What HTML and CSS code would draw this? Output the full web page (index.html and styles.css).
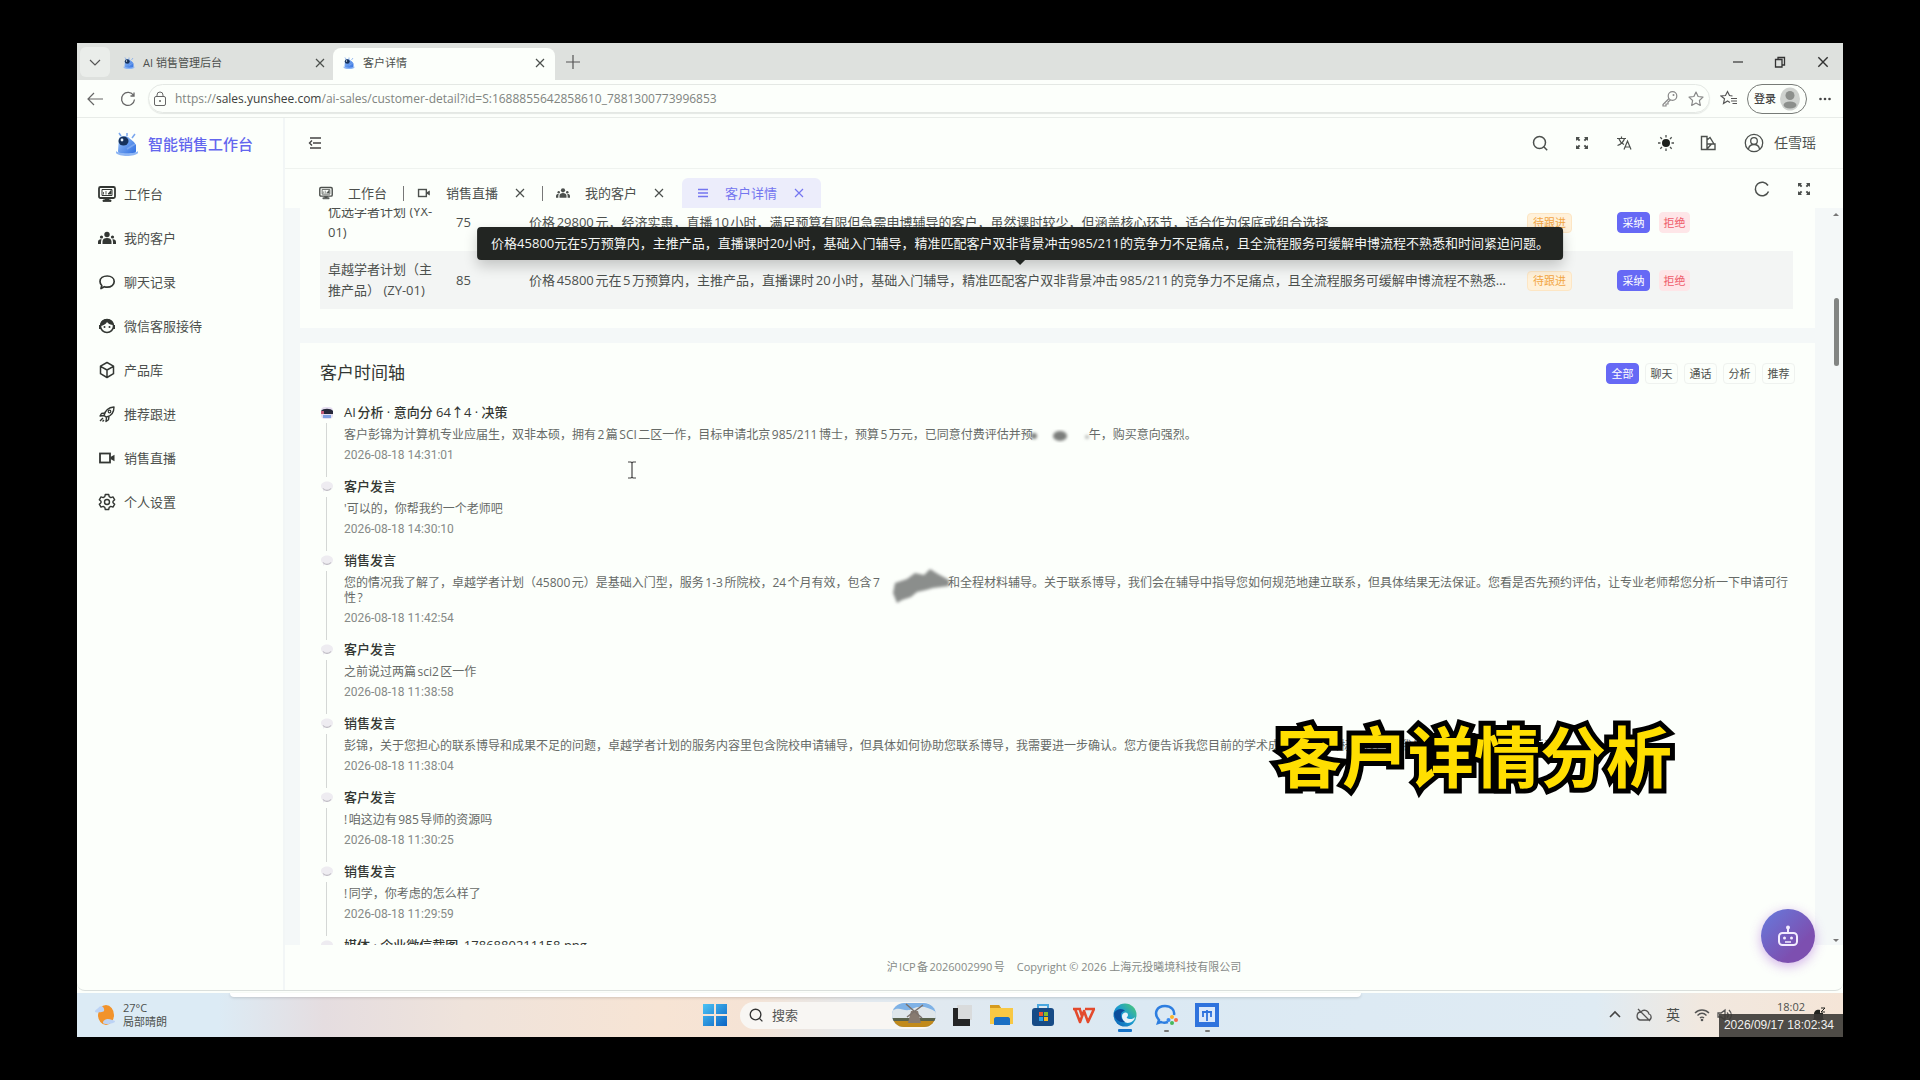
FILE: index.html
```html
<!DOCTYPE html>
<html lang="zh-CN">
<head>
<meta charset="utf-8">
<title>客户详情</title>
<link rel="stylesheet" href="styles.css">
</head>
<body>
<svg class="defs" aria-hidden="true">
  <defs>
    <linearGradient id="gBlue" x1="0" y1="0" x2="1" y2="1"><stop offset="0" stop-color="#4cc3f5"/><stop offset="1" stop-color="#0a63c4"/></linearGradient>
    <linearGradient id="gBot" x1="0" y1="0" x2="1" y2="1"><stop offset="0" stop-color="#9cc4f8"/><stop offset="1" stop-color="#2a6be0"/></linearGradient>
    <linearGradient id="gEdge" x1="0" y1="1" x2="1" y2="0"><stop offset="0" stop-color="#0b5cb5"/><stop offset=".5" stop-color="#1c9bd0"/><stop offset="1" stop-color="#52cf6b"/></linearGradient>
    <filter id="soft" x="-20%" y="-20%" width="140%" height="140%"><feGaussianBlur stdDeviation="1.4"/></filter>
  </defs>
  <symbol id="i-monitor" viewBox="0 0 18 18"><rect x="1" y="2" width="16" height="11" rx="1.500" fill="none" stroke="currentColor" stroke-width="1.800"/><path d="M4 4.500h10v6H4z" fill="none" stroke="currentColor" stroke-width="1"/><path d="M5.500 9.500V7M8 9.500V6M10 9l3-3.500V9zM7 13.500h4V15h2v1.500H5V15h2z" fill="currentColor" stroke="currentColor" stroke-width=".8"/></symbol>
  <symbol id="i-people" viewBox="0 0 18 18"><g fill="currentColor"><circle cx="9" cy="5.500" r="2.700"/><circle cx="3.500" cy="8" r="1.600"/><circle cx="14.500" cy="8" r="1.600"/><path d="M4.500 15v-2.500C4.500 10 6.500 9 9 9s4.500 1 4.500 3.500V15zM0 15v-2c0-2 1.500-2.800 3.600-2.600C3 11.500 3 13 3 15zM18 15v-2c0-2-1.500-2.800-3.600-2.600C15 11.500 15 13 15 15z"/></g></symbol>
  <symbol id="i-chat" viewBox="0 0 18 18"><path d="M3 15.500l.8-3C2.500 11.300 2 10 2 8.500 2 5.200 5.200 3 9.200 3s7 2.300 7 5.500-3 5.700-7 5.700c-1 0-2-.2-2.900-.5z" fill="none" stroke="currentColor" stroke-width="1.700" stroke-linejoin="round"/></symbol>
  <symbol id="i-service" viewBox="0 0 18 18"><circle cx="9" cy="9" r="6.500" fill="none" stroke="currentColor" stroke-width="1.500"/><path d="M2.500 9C2 4 5.500 2 9 2s6.500 2.500 6.500 6c-3 0-5-1-6.500-3-1 2-3.500 3.500-6.500 4z" fill="currentColor"/><circle cx="6.500" cy="10" r="1" fill="currentColor"/><circle cx="11.500" cy="10" r="1" fill="currentColor"/><path d="M1 8h2v4H1zM15 8h2v4h-2z" fill="currentColor"/></symbol>
  <symbol id="i-box" viewBox="0 0 18 18"><path d="M9 1.500l6.500 3.600v7.600L9 16.500l-6.500-3.800V5.100zM2.500 5.300L9 9l6.500-3.700M9 9v7.500" fill="none" stroke="currentColor" stroke-width="1.500" stroke-linejoin="round"/></symbol>
  <symbol id="i-rocket" viewBox="0 0 18 18"><path d="M6 10.500C7 6 10 2.500 16 2c0 5.500-3 9-7.500 10zM6.800 8L3.500 8.500 2 11l4-.5 2.500 2L8 16.500l2.500-1.800.5-3.300M2 16l3-3M4.500 16.500L6 15" fill="none" stroke="currentColor" stroke-width="1.400" stroke-linejoin="round"/><circle cx="11.500" cy="6.500" r="1.300" fill="none" stroke="currentColor" stroke-width="1.200"/></symbol>
  <symbol id="i-video" viewBox="0 0 18 18"><rect x="2" y="4.500" width="10" height="9" fill="none" stroke="currentColor" stroke-width="1.800"/><path d="M12.500 8l4-2.300v6.600l-4-2.300z" fill="currentColor"/></symbol>
  <symbol id="i-gear" viewBox="0 0 18 18"><path d="M7.300 1.500h3.400l.5 2.200 1.600.9 2.200-.7 1.700 2.900-1.700 1.500v1.400l1.700 1.500-1.700 2.900-2.200-.7-1.600.9-.5 2.200H7.300l-.5-2.200-1.600-.9-2.200.7-1.700-2.900L3 9.700V8.300L1.300 6.800 3 3.900l2.200.7 1.600-.9z" fill="none" stroke="currentColor" stroke-width="1.400" stroke-linejoin="round"/><circle cx="9" cy="9" r="2.500" fill="none" stroke="currentColor" stroke-width="1.400"/></symbol>
  <symbol id="i-close" viewBox="0 0 12 12"><path d="M2 2l8 8M10 2l-8 8" stroke="currentColor" stroke-width="1.200"/></symbol>
  <symbol id="i-expand" viewBox="0 0 18 18"><path d="M3 3h4L5.800 4.200 7.300 6 6 7.300 4.200 5.800 3 7zM15 3h-4l1.200 1.200L10.700 6 12 7.300l1.800-1.500L15 7zM3 15h4l-1.200-1.200L7.300 12 6 10.700l-1.800 1.500L3 11zM15 15h-4l1.200-1.200-1.500-1.800 1.300-1.300 1.800 1.500L15 11z" fill="currentColor"/></symbol>
  <symbol id="i-search" viewBox="0 0 18 18"><circle cx="8.500" cy="8.500" r="6" fill="none" stroke="currentColor" stroke-width="1.500"/><path d="M12.800 12.800l3.400 3.400" stroke="currentColor" stroke-width="1.500"/></symbol>
  <symbol id="i-reload" viewBox="0 0 18 18"><path d="M14.600 5.500A6.500 6.500 0 1 0 15.500 9.500M15 2.500v3.500h-3.500" fill="none" stroke="currentColor" stroke-width="1.300"/></symbol>
  <symbol id="i-star" viewBox="0 0 18 18"><path d="M9 2l2.100 4.500 4.900.6-3.600 3.400.9 4.900L9 13l-4.300 2.400.9-4.900L2 7.100l4.900-.6z" fill="none" stroke="currentColor" stroke-width="1.200" stroke-linejoin="round"/></symbol>
  <symbol id="i-bot" viewBox="0 0 24 24"><path d="M4 6c2-2 6-3 9-1 3 3 6 4 8 8v6c0 3-4 4-9 4s-9-1-9-4z" fill="url(#gBot)"/><path d="M1 19c2 3 20 3 22 0v2c-3 4-19 4-22 0z" fill="#8eb6f4"/><ellipse cx="8.500" cy="9" rx="5" ry="4.500" fill="#16325c"/><circle cx="7" cy="8" r="1.400" fill="#eaf4ff"/><path d="M6 4l-2-3M12 4V1M17 6l3-4M12 17l8-5" stroke="#79a6ee" stroke-width="1.500"/></symbol>
  <symbol id="i-bubble" viewBox="0 0 14 14"><path d="M1 6c0-3 3-4.500 6-4.500S13 3 13 6s-3 5-6 5c-1 0-2 0-2.500-.4L3 12V9.500C1.800 8.700 1 7.500 1 6z" fill="#eeecf1"/><path d="M3 8.500c2 2.500 6 2.500 8 0" fill="none" stroke="#bdbbc2" stroke-width="1.200"/></symbol>
</svg>

<div class="screen">
  <header class="tabbar">
    <button class="tab-menu" aria-label="标签页菜单"><svg width="14" height="14" viewBox="0 0 14 14"><path d="M2 5l5 5 5-5" fill="none" stroke="#555" stroke-width="1.200"/></svg></button>
    <div class="btab"><svg width="12" height="12"><use href="#i-bot"/></svg><span>AI 销售管理后台</span><button aria-label="关闭"><svg width="12" height="12"><use href="#i-close"/></svg></button></div>
    <div class="btab active"><svg width="12" height="12"><use href="#i-bot"/></svg><span>客户详情</span><button aria-label="关闭"><svg width="12" height="12"><use href="#i-close"/></svg></button></div>
    <button class="new-tab" aria-label="新建标签页"><svg width="14" height="14" viewBox="0 0 14 14"><path d="M7 0v14M0 7h14" stroke="#555" stroke-width="1.200"/></svg></button>
    <div class="win-ctl">
      <button aria-label="最小化"><svg width="12" height="12" viewBox="0 0 12 12"><path d="M1 6h10" stroke="#333" stroke-width="1.200"/></svg></button>
      <button aria-label="还原"><svg width="12" height="12" viewBox="0 0 12 12"><path d="M1.500 3.500h6.500V11H1.500zM4 3.500V1.500h6.500V9H8" fill="none" stroke="#333" stroke-width="1.300"/></svg></button>
      <button aria-label="关闭窗口"><svg width="14" height="14"><use href="#i-close"/></svg></button>
    </div>
  </header>

  <div class="toolbar">
    <button aria-label="后退"><svg width="18" height="16" viewBox="0 0 18 16"><path d="M17 8H2M8 2L2 8l6 6" fill="none" stroke="#666" stroke-width="1.200"/></svg></button>
    <button aria-label="刷新"><svg width="18" height="18"><use href="#i-reload"/></svg></button>
    <div class="url">
      <svg width="14" height="16" viewBox="0 0 14 16"><rect x="1.500" y="5.500" width="11" height="9" rx="1.500" fill="none" stroke="#666"/><path d="M4 5.500V4a3 3 0 0 1 6 0v1.500" fill="none" stroke="#666"/><circle cx="7" cy="10" r="1" fill="#666"/></svg>
      <span class="address">https://<b>sales.yunshee.com</b>/ai-sales/customer-detail?id=S:1688855642858610_7881300773996853</span>
      <svg width="18" height="18" viewBox="0 0 18 18"><circle cx="11.500" cy="6" r="4.300" fill="none" stroke="#888" stroke-width="1.200"/><circle cx="12.500" cy="5" r="1" fill="#888"/><path d="M8 8.500l-6 6V16h3v-2h2v-2l2.500-2" fill="none" stroke="#888" stroke-width="1.200"/></svg>
      <svg width="18" height="18" color="#888"><use href="#i-star"/></svg>
    </div>
    <svg width="18" height="18" viewBox="0 0 18 18"><path d="M10 12.500L7.500 11l-4 2.500 1-4.700L1 6l4.500-.5L7.500 1.500l2 4 3 .5M11 8.500h6M11 11h6M12.500 13.500H17" fill="none" stroke="#555" stroke-width="1.200"/></svg>
    <button class="login">登录<svg width="20" height="24" viewBox="0 0 20 24"><ellipse cx="10" cy="12" rx="10" ry="11.500" fill="#cfd2cf"/><circle cx="10" cy="8.500" r="4.500" fill="#8c8f8c"/><ellipse cx="10" cy="18" rx="6.500" ry="3.500" fill="#8c8f8c"/></svg></button>
    <button aria-label="更多"><svg width="14" height="6" viewBox="0 0 14 6"><g fill="#444"><circle cx="2.500" cy="3" r="1.300"/><circle cx="7" cy="3" r="1.300"/><circle cx="11.500" cy="3" r="1.300"/></g></svg></button>
  </div>

  <div class="app">
    <aside class="side">
      <div class="brand"><svg width="24" height="24"><use href="#i-bot"/></svg>智能销售工作台</div>
      <nav>
        <a href="#"><svg><use href="#i-monitor"/></svg>工作台</a>
        <a href="#"><svg><use href="#i-people"/></svg>我的客户</a>
        <a href="#"><svg><use href="#i-chat"/></svg>聊天记录</a>
        <a href="#"><svg><use href="#i-service"/></svg>微信客服接待</a>
        <a href="#"><svg><use href="#i-box"/></svg>产品库</a>
        <a href="#"><svg><use href="#i-rocket"/></svg>推荐跟进</a>
        <a href="#"><svg><use href="#i-video"/></svg>销售直播</a>
        <a href="#"><svg><use href="#i-gear"/></svg>个人设置</a>
      </nav>
    </aside>

    <div class="main">
      <div class="head">
        <button aria-label="折叠菜单"><svg width="14" height="14" viewBox="0 0 14 14"><path d="M2 2h11M5 7h8M2 12h11M4 4.500L1.500 7 4 9.500" fill="none" stroke="#444" stroke-width="1.400"/></svg></button>
        <div class="tools">
          <button aria-label="搜索"><svg><use href="#i-search"/></svg></button>
          <button aria-label="全屏"><svg><use href="#i-expand"/></svg></button>
          <button aria-label="语言"><svg viewBox="0 0 18 18"><path d="M2 4.500h9M6.500 2.500v2M9.500 4.500C8.500 8 5.500 10.500 2.500 11.500M4 5c.8 2.500 3 4.500 5 5.500M9 15.500L12.500 7l3.500 8.500M10 13h5" fill="none" stroke="currentColor" stroke-width="1.200"/></svg></button>
          <button aria-label="主题"><svg viewBox="0 0 18 18"><circle cx="9" cy="9" r="4" fill="#1d211d"/><path d="M9 1v2.500M9 14.500V17M1 9h2.500M14.500 9H17M3.300 3.300L5 5M13 13l1.700 1.700M3.300 14.700L5 13M13 5l1.700-1.700" stroke="currentColor" stroke-width="1.300"/></svg></button>
          <button aria-label="布局"><svg viewBox="0 0 18 18"><path d="M2.500 2.500h5.500v13H2.500zM8 6l3-2.500 4 6.500H8M8 15.500h8V10h-3.500L8 15" fill="none" stroke="currentColor" stroke-width="1.400"/></svg></button>
        </div>
        <button class="user"><svg width="20" height="20" viewBox="0 0 20 20"><circle cx="10" cy="10" r="8.700" fill="none" stroke="currentColor" stroke-width="1.300"/><circle cx="10" cy="8" r="3.300" fill="none" stroke="currentColor" stroke-width="1.300"/><path d="M4.500 16c.5-3 2.500-4.500 5.500-4.500s5 1.500 5.500 4.500" fill="none" stroke="currentColor" stroke-width="1.300"/></svg>任雪瑶</button>
      </div>

      <div class="tabs">
        <a class="ptab" href="#"><svg><use href="#i-monitor"/></svg>工作台</a>
        <a class="ptab" href="#"><svg><use href="#i-video"/></svg>销售直播<svg class="x"><use href="#i-close"/></svg></a>
        <a class="ptab" href="#"><svg><use href="#i-people"/></svg>我的客户<svg class="x"><use href="#i-close"/></svg></a>
        <a class="ptab current" href="#"><svg viewBox="0 0 14 14"><path d="M2 3.500h10M2 7h10M2 10.500h10" stroke="currentColor" stroke-width="1.400"/></svg>客户详情<svg class="x"><use href="#i-close"/></svg></a>
        <div class="tabtools">
          <button aria-label="刷新页面"><svg viewBox="0 0 18 18"><path d="M15 5.500a6.800 6.800 0 1 0 .5 6" fill="none" stroke="currentColor" stroke-width="1.500"/></svg></button>
          <button aria-label="最大化"><svg><use href="#i-expand"/></svg></button>
        </div>
      </div>

      <div class="view">
        <section class="card recs">
          <table>
            <colgroup><col class="c-name"><col class="c-score"><col><col class="c-state"><col class="c-act"></colgroup>
            <tr>
              <td>优选学者计划 (YX-01)</td><td>75</td>
              <td><div class="clip">价格29800元，经济实惠，直播10小时，满足预算有限但急需申博辅导的客户，虽然课时较少，但涵盖核心环节，适合作为保底或组合选择</div></td>
              <td><span class="tag">待跟进</span></td>
              <td><button class="btn primary">采纳</button><button class="btn danger">拒绝</button></td>
            </tr>
            <tr class="hover">
              <td>卓越学者计划（主推产品） (ZY-01)</td><td>85</td>
              <td class="tipcell"><div class="clip">价格45800元在5万预算内，主推产品，直播课时20小时，基础入门辅导，精准匹配客户双非背景冲击985/211的竞争力不足痛点，且全流程服务可缓解申博流程不熟悉和时间紧迫问题。</div>
                <div class="tip" role="tooltip">价格45800元在5万预算内，主推产品，直播课时20小时，基础入门辅导，精准匹配客户双非背景冲击985/211的竞争力不足痛点，且全流程服务可缓解申博流程不熟悉和时间紧迫问题。</div></td>
              <td><span class="tag">待跟进</span></td>
              <td><button class="btn primary">采纳</button><button class="btn danger">拒绝</button></td>
            </tr>
          </table>
        </section>

        <section class="card">
          <div class="card-head">
            <h2>客户时间轴</h2>
            <div class="filters"><button class="btn primary">全部</button><button class="btn">聊天</button><button class="btn">通话</button><button class="btn">分析</button><button class="btn">推荐</button></div>
          </div>
          <ol class="line">
            <li><svg viewBox="0 0 14 14"><rect x="1" y="1" width="12" height="12" rx="4" fill="#e6dff0"/><path d="M1 5c2-3 10-3 12 0v3H1z" fill="#26283a"/><path d="M1 5h3v3H1z" fill="#c05a78"/><path d="M3 9h8v3H3z" fill="#7e9fe0"/></svg>
              <div><h3>AI分析 · 意向分 64↑4 · 决策</h3><p>客户彭锦为计算机专业应届生，双非本硕，拥有2篇SCI二区一作，目标申请北京985/211博士，预算5万元，已同意付费评估并预<svg class="smudge sm" viewBox="0 0 56 14"><g filter="url(#soft)" fill="#7b7e7b"><circle cx="1" cy="7" r="3"/><ellipse cx="27" cy="7" rx="7" ry="5"/><circle cx="54" cy="8" r="2" fill="#b5b8b5"/></g></svg>午，购买意向强烈。</p><time>2026-08-18 14:31:01</time></div></li>
            <li><svg><use href="#i-bubble"/></svg><div><h3>客户发言</h3><p>'可以的，你帮我约一个老师吧</p><time>2026-08-18 14:30:10</time></div></li>
            <li><svg><use href="#i-bubble"/></svg><div><h3>销售发言</h3><p>您的情况我了解了，卓越学者计划（45800元）是基础入门型，服务1-3所院校，24个月有效，包含7<svg class="smudge lg" viewBox="0 0 68 36"><path d="M15 17l12-4 8-6 9 2 6-6 8 5 11 6v6l-16 2-7 2-9 2-6 5-9 3-5 3-4-10z" fill="#8b8e8c" filter="url(#soft)"/></svg>和全程材料辅导。关于联系博导，我们会在辅导中指导您如何规范地建立联系，但具体结果无法保证。您看是否先预约评估，让专业老师帮您分析一下申请可行性?</p><time>2026-08-18 11:42:54</time></div></li>
            <li><svg><use href="#i-bubble"/></svg><div><h3>客户发言</h3><p>之前说过两篇sci2区一作</p><time>2026-08-18 11:38:58</time></div></li>
            <li><svg><use href="#i-bubble"/></svg><div><h3>销售发言</h3><p>彭锦，关于您担心的联系博导和成果不足的问题，卓越学者计划的服务内容里包含院校申请辅导，但具体如何协助您联系博导，我需要进一步确认。您方便告诉我您目前的学术成果和北京目标院校吗？我先为您做一个初步的分析评估。</p><time>2026-08-18 11:38:04</time></div></li>
            <li><svg><use href="#i-bubble"/></svg><div><h3>客户发言</h3><p>!咱这边有985导师的资源吗</p><time>2026-08-18 11:30:25</time></div></li>
            <li><svg><use href="#i-bubble"/></svg><div><h3>销售发言</h3><p>!同学，你考虑的怎么样了</p><time>2026-08-18 11:29:59</time></div></li>
            <li><svg><use href="#i-bubble"/></svg><div><h3>媒体 · 企业微信截图_1786880211158.png</h3></div></li>
          </ol>
        </section>
        <div class="scroll"><i class="up"></i><i class="thumb"></i><i class="down"></i></div>
      </div>
      <footer><span>沪ICP备2026002990号</span><span>Copyright © 2026 上海元投曦境科技有限公司</span></footer>
      <button class="assistant" aria-label="智能助手"><svg width="22" height="22" viewBox="0 0 22 22"><rect x="2" y="8" width="18" height="12" rx="3.500" fill="none" stroke="#f3ecff" stroke-width="2"/><path d="M11 8V3" stroke="#f3ecff" stroke-width="2"/><circle cx="11" cy="2.500" r="2" fill="#f3ecff"/><circle cx="7.500" cy="13" r="1.500" fill="#f3ecff"/><circle cx="14.500" cy="13" r="1.500" fill="#f3ecff"/><path d="M8 17h6" stroke="#f3ecff" stroke-width="1.500"/></svg></button>
    </div>
  </div>

  <div class="taskbar">
    <div class="weather"><svg width="22" height="24" viewBox="0 0 22 24"><ellipse cx="12" cy="12" rx="8" ry="10" fill="#f2932b"/><path d="M1 9c0-3 3-3 4-5 3-2 6 1 5 4 0 1-8 2-9 1zM9 20c0-3 3-4 5-4 3 0 4 1 7 2 1 3-11 4-12 2z" fill="#bcd3f5"/></svg><div><span>27°C</span><span>局部晴朗</span></div></div>
    <div class="dock">
      <svg width="24" height="24" viewBox="0 0 24 24"><path d="M0 1h11v10H0zM13 1h11v10H13zM0 13h11v10H0zM13 13h11v10H13z" fill="url(#gBlue)"/></svg>
      <label class="search"><svg width="16" height="16"><use href="#i-search"/></svg><input type="text" placeholder="搜索" aria-label="搜索"><svg width="44" height="24" viewBox="0 0 44 24"><clipPath id="pic"><rect width="44" height="24" rx="12"/></clipPath><g clip-path="url(#pic)"><path d="M0 0h44v24H0z" fill="#7fb2e6"/><path d="M0 8c8-6 12 2 20-2s16-2 24 3v6H0z" fill="#dfe6ea"/><path d="M0 18h44v6H0z" fill="#c18a1c"/><path d="M0 15h44v3H0z" fill="#59614a"/><path d="M19 8l7 0 3 12H16z" fill="#877a70"/><path d="M14 1l16 14M31 2L15 14" stroke="#7b726c" stroke-width="1.500"/></g></svg></label>
      <svg width="24" height="24" viewBox="0 0 24 24"><path d="M8 2h15v15H8z" fill="#d9dbdc"/><path d="M4 5h5v11h12v7H4z" fill="#242526"/></svg>
      <svg width="24" height="24" viewBox="0 0 24 24"><path d="M0 2h9l2 3h12v16H0z" fill="#f8c844"/><path d="M0 2h9l2 3H0z" fill="#d69b1e"/><path d="M4 22v-6c0-1 1-2 2-2h12c1 0 2 1 2 2v6z" fill="#1a6fc4"/></svg>
      <svg width="24" height="24" viewBox="0 0 24 24"><path d="M7 6V2h10v4" fill="none" stroke="#4aa7e0" stroke-width="2"/><rect x="1" y="5" width="22" height="18" rx="3" fill="#174b86"/><path d="M8 9h4v4H8z" fill="#f0562e"/><path d="M13 9h4v4h-4z" fill="#86bd2c"/><path d="M8 14h4v4H8z" fill="#2ea3e6"/><path d="M13 14h4v4h-4z" fill="#f8b91c"/></svg>
      <svg width="24" height="24" viewBox="0 0 24 24"><path d="M1 6h8M13 6h10M3 6l5 13 4-11 4 11 6-13M8 7l2 6" fill="none" stroke="#e34a2d" stroke-width="2.600" stroke-linejoin="round"/></svg>
      <span class="running on"><svg width="24" height="24" viewBox="0 0 24 24"><circle cx="12" cy="12" r="11.500" fill="url(#gEdge)"/><path d="M9 13c0-4 6-5 6-1 0 2-2 2-1 3 2 2 7 1 8-1-1 7-13 9-13-1z" fill="#e8f3fa"/><path d="M1 10c3-5 9-5 11-2-5 0-6 7 0 11-7 1-11-4-11-9z" fill="#0c4d9c"/></svg></span>
      <span class="running"><svg width="24" height="24" viewBox="0 0 24 24"><path d="M14 19c-3 1-5 1-7 0l-3 1 1-3C-1 10 3 3 11 3c6 0 10 4 9 9" fill="none" stroke="#2d7ee0" stroke-width="2.500"/><circle cx="18" cy="14" r="2" fill="#f9b42a"/><circle cx="22" cy="17" r="2" fill="#fb6a4a"/><circle cx="18" cy="20" r="2" fill="#46b85c"/><circle cx="14.500" cy="17" r="2" fill="#3b8bf0"/></svg></span>
      <span class="running"><svg width="24" height="24" viewBox="0 0 24 24"><path d="M0 0h24v24H0z" fill="#2f73dd"/><path d="M4 4h16v15H4z" fill="#dbe9fb"/><path d="M12 7v11M7 9h10M8 9v5M16 9v5" fill="none" stroke="#2f73dd" stroke-width="1.800"/></svg></span>
    </div>
    <div class="tray">
      <svg width="14" height="14" viewBox="0 0 14 14"><path d="M2 9l5-5 5 5" fill="none" stroke="#444" stroke-width="1.600"/></svg>
      <svg width="16" height="16" viewBox="0 0 16 16"><path d="M4 13h8c4 0 4-5 1-6-1-4-6-5-8-2-5 0-5 7-1 8zM2 2l12 12" fill="none" stroke="#555" stroke-width="1.300"/></svg>
      <span>英</span>
      <svg width="16" height="16" viewBox="0 0 16 16"><path d="M1 6c4-4 10-4 14 0M3.500 8.500c3-3 6-3 9 0M6 11c1-1 3-1 4 0" fill="none" stroke="#555" stroke-width="1.400"/><circle cx="8" cy="13" r="1.300" fill="#555"/></svg>
      <svg class="volume" width="16" height="16" viewBox="0 0 16 16"><path d="M1 6h3l4-3v10l-4-3H1zM10 5.500c1.500 1.500 1.500 3.500 0 5M12 3c3 3 3 7 0 10" fill="none" stroke="#555" stroke-width="1.300"/></svg>
      <time>18:02</time>
      <svg width="14" height="16" viewBox="0 0 14 16"><path d="M2 11V7c0-4 4-5 6-4v3h3v5l1 2H1z" fill="#22231f"/><path d="M9 1h4L9 5h4" fill="none" stroke="#22231f"/></svg>
    </div>
  </div>

  <div class="stamp">2026/09/17 18:02:34</div>
  <div class="caption">客户详情分析</div>
  <svg class="ibeam" viewBox="0 0 10 18"><path d="M1 1h3l1 1 1-1h3M5 2v14M1 17h3l1-1 1 1h3" fill="none" stroke="#444" stroke-width="1.200"/></svg>
</div>
</body>
</html>
```
FILE: styles.css
```css
* { box-sizing: border-box; }
html, body { margin: 0; height: 100%; }
body {
  background: #000;
  padding: 43px 77px;
  font: 13px/20px "Open Sans", "Noto Sans CJK SC", sans-serif;
  color: #4c504d;
  text-autospace: normal;
}
button { border: 0; padding: 0; margin: 0; background: none; font: inherit; color: inherit; display: inline-flex; align-items: center; justify-content: center; }
a { color: inherit; text-decoration: none; }
h2, h3, p, ol { margin: 0; padding: 0; font-weight: 400; }
svg { display: block; flex: none; }
.defs { position: absolute; width: 0; height: 0; }

.screen { position: relative; height: 100%; display: flex; flex-direction: column; background: #fcfffb; overflow: hidden; }

/* browser chrome */
.tabbar { display: flex; align-items: flex-end; height: 37px; flex: none; background: #dee1de; font-size: 11px; padding-left: 3px; }
.tab-menu { width: 30px; height: 30px; margin: 0 3px 3px 0; border-radius: 6px; background: #eaedea; }
.btab { width: 222px; height: 32px; display: flex; align-items: center; gap: 8px; padding: 0 9px 3px 10px; border-radius: 8px 8px 0 0; }
.btab:not(.active) { margin-right: -2px; }
.btab.active { background: #fcfffb; }
.btab span { flex: 1; }
.new-tab { width: 36px; height: 36px; padding-bottom: 1px; }
.win-ctl { display: flex; gap: 30px; align-self: center; margin-left: auto; padding-right: 13px; color: #333; }
.toolbar { display: flex; align-items: center; height: 38px; flex: none; gap: 15px; padding: 0 11px 0 9px; border-bottom: 1px solid #e8ece8; color: #666; }
.url { flex: 1; display: flex; align-items: center; gap: 8px; height: 29px; border: 1px solid #e4e8e4; border-radius: 15px; padding: 0 4px; margin: 0 -5px 0 -4px; box-shadow: 0 1px 1px #e4e8e4; }
.address { flex: 1; font-size: 12px; color: #808480; }
.address b { font-weight: 400; color: #3c403c; }
.login { width: 60px; height: 30px; gap: 4px; border: 1px solid #777b77; border-radius: 15px; font-size: 11px; font-weight: 500; margin: 0 -4px 0 -6px; color: #444; }

/* application */
.app { flex: 1; min-height: 0; display: flex; border-bottom: 1px solid #dadfdc; border-radius: 0 0 8px 8px; }
.side { width: 208px; flex: none; border-right: 2px solid #f2f6f6; }
.brand { display: flex; align-items: center; gap: 9px; height: 52px; padding-left: 38px; font-size: 15px; font-weight: 500; color: #6366ee; }
.side a { display: flex; align-items: center; gap: 8px; height: 44px; padding-left: 21px; }
.side nav { padding-top: 2px; }
.side svg { color: #333733; }
.side a svg { width: 18px; height: 18px; }
.main { position: relative; flex: 1; min-width: 0; display: flex; flex-direction: column; }
.head { display: flex; align-items: center; height: 51px; flex: none; padding: 0 27px 0 23px; border-bottom: 1px solid #eff3ef; }
.tools { display: flex; gap: 24px; margin-left: auto; }
.tools svg, .tabtools svg { width: 18px; height: 18px; }
.user { gap: 10px; margin-left: 27px; font-size: 14px; }
.tabs { display: flex; align-items: flex-end; height: 39px; flex: none; padding: 0 30px 0 22px; }
.ptab { display: flex; align-items: center; height: 30px; gap: 15px; padding: 0 2px 0 12px; }
.ptab svg { width: 14px; height: 14px; }
.ptab .x { width: 12px; height: 12px; margin-left: 1px; }
.ptab + .ptab:not(.current)::before { content: ""; width: 1px; height: 15px; background: #777; margin: 0 -2px 0 2px; }
.ptab.current { background: #ecedfb; color: #7476f0; padding: 0 16px 0 14px; margin-left: 15px; border-radius: 6px 6px 0 0; }
.tabtools { display: flex; gap: 24px; margin-left: auto; align-self: center; }

.view { position: relative; flex: 1; min-height: 0; overflow: hidden; background: #f4f8f8; padding: 0 28px 0 15px; }
.card { background: #fcfffb; padding: 0 22px 0 20px; margin-bottom: 15px; }
.recs { margin-top: -15px; padding-bottom: 19px; }
table { width: 100%; table-layout: fixed; border-collapse: collapse; line-height: 21px; }
td { height: 58px; padding: 0 8px; }
.c-name { width: 128px; } .c-score { width: 73px; } .c-state { width: 90px; } .c-act { width: 184px; }
.hover td { background: #f3f5f4; }
.clip { overflow: hidden; white-space: nowrap; text-overflow: ellipsis; }
.tipcell { position: relative; }
.tip { position: absolute; bottom: 49px; left: 50%; transform: translateX(-50%); padding: 6px 14px; white-space: nowrap; text-autospace: no-autospace; color: #f4f6f4; background: #222522; border-radius: 4px; box-shadow: 0 6px 14px rgba(0,0,0,.2); z-index: 2; }
.tip::after { content: ""; position: absolute; top: 100%; left: 50%; margin-left: -5px; border: 5px solid transparent; border-top-color: #222522; }
.tag { display: inline-block; padding: 0 5px; font-size: 11px; line-height: 18px; border: 1px solid #fde6c4; border-radius: 4px; background: #fff1da; color: #f2a644; }
.btn { height: 21px; width: 33px; font-size: 11px; line-height: 19px; border: 1px solid #eff2ef; border-radius: 4px; }
.btn.primary { background: #6669f5; border-color: #6669f5; color: #fff; }
.btn.danger { background: #fee6e8; border-color: #fee6e8; color: #ef5b6b; width: 31px; margin-left: 9px; }
.card-head { display: flex; align-items: center; justify-content: space-between; height: 60px; margin-right: -2px; }
h2 { font-size: 17px; line-height: 24px; color: #333733; }
.filters { display: flex; gap: 6px; }
.line { list-style: none; }
.line li { position: relative; display: flex; gap: 10px; padding-bottom: 14px; }
.line li > svg { width: 14px; height: 14px; margin-top: 3px; }
.line li::after { content: ""; position: absolute; left: 6px; top: 20px; bottom: 0; width: 1px; background: #d4d7d5; }
h3 { font-size: 13px; line-height: 18px; font-weight: 500; color: #333733; }
.line p { font-size: 12px; line-height: 15px; margin: 6px 0 5px; color: #666a67; }
.line time { display: block; font-family: Roboto, sans-serif; font-size: 12px; line-height: 16px; color: #868a87; }
.smudge { display: inline-block; vertical-align: middle; overflow: visible; }
.smudge.sm { width: 56px; height: 14px; margin: -3px 0; }
.smudge.lg { width: 68px; height: 36px; margin: -12px 0; }
.scroll { position: absolute; top: 0; right: 4px; bottom: 0; width: 6px; display: flex; flex-direction: column; align-items: center; padding: 5px 0 3px; }
.scroll i { flex: none; }
.up, .down { border: 3px solid transparent; }
.up { border-bottom-color: #777; border-top-width: 0; }
.down { border-top-color: #777; border-bottom-width: 0; margin-top: auto; }
.thumb { width: 5px; height: 68px; margin-top: 82px; border-radius: 3px; background: #828583; }
footer { display: flex; justify-content: center; gap: 12px; height: 45px; flex: none; padding-top: 12px; font-size: 11px; color: #868a87; }
.assistant { position: absolute; right: 28px; bottom: 27px; width: 54px; height: 54px; border-radius: 50%; background: linear-gradient(135deg, #667bdd, #7d4fb0 70%); box-shadow: 0 3px 12px rgba(160,80,210,.45); }

/* system taskbar */
.taskbar { position: relative; flex: none; height: 44px; margin-top: 2px; display: grid; grid-template-columns: 1fr auto 1fr; align-items: center; font-size: 11px;
  background: linear-gradient(90deg, #dcebf5 0 8%, #e5dde0 14%, #efe3db 22%, #f7e4d4 33%, #f5e3d5 38%, #e2e9ef 45%, #dbe9f3 60%, #dfebf3 86%, #f1e8df 92%, #f5e5d7); }
.taskbar::before { content: ""; position: absolute; left: 153px; right: 482px; top: 0; height: 4px; background: #fff; border-radius: 0 0 4px 4px; box-shadow: 0 1px 3px rgba(0,0,0,.15); }
.weather { display: flex; align-items: center; gap: 7px; padding-left: 17px; line-height: 14px; }
.weather span { display: block; }
.dock { display: flex; align-items: center; gap: 17px; padding-left: 2px; }
.search { display: flex; align-items: center; width: 196px; height: 27px; gap: 8px; padding-left: 8px; margin: 0 -4px; border-radius: 14px; background: #f8f6f3; color: #333; }
.search input { flex: 1; min-width: 0; border: 0; padding: 0; background: none; font: inherit; font-size: 13px; color: #555; }
.search input::placeholder { color: #555; opacity: 1; }
.running { position: relative; }
.running::after { content: ""; position: absolute; left: 10px; bottom: -5px; width: 5px; height: 2px; border-radius: 1px; background: #777; }
.running.on::after { left: 5px; width: 14px; height: 3px; background: #1673c8; }
.tray { display: flex; align-items: center; justify-content: flex-end; gap: 14px; padding-right: 17px; }
.tray span { font-size: 14px; }
.volume { margin-left: -7px; }
.tray time { margin: -16px -7px 0 30px; }
.stamp { position: absolute; right: 0; bottom: 0; padding: 0 9px 0 5px; height: 23px; font: 12px/22px "Liberation Sans", sans-serif; color: #f0f0ee; background: rgba(60,58,54,.9); }
.caption { position: absolute; right: 171px; bottom: 248px; font-size: 66px; line-height: 66px; font-weight: 700; color: #ffde00; -webkit-text-stroke: 10px #000; paint-order: stroke fill; stroke-linejoin: round; }
.ibeam { position: absolute; left: 550px; top: 418px; width: 10px; height: 18px; }
```
